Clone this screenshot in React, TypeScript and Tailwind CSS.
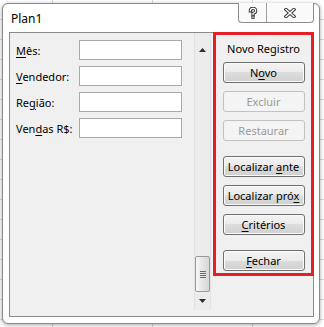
import React from 'react';

const font = "font-['Segoe_UI','Noto_Sans',sans-serif]";

function U({ children }: { children: React.ReactNode }) {
  return <span className="underline decoration-1 underline-offset-[2px]">{children}</span>;
}

function Btn({ children, disabled }: { children: React.ReactNode; disabled?: boolean }) {
  return (
    <div
      className={`flex h-[21px] w-[82px] items-center justify-center rounded-[3px] border text-[11px] leading-none ${
        disabled
          ? 'border-[#c2c2c2] bg-[#f4f4f4] text-[#9a9a9a]'
          : 'border-[#707070] text-black shadow-[inset_0_0_0_1px_#fbfbfb] [background-image:linear-gradient(#f3f3f3_0%,#ebebeb_50%,#dddddd_50%,#d0d0d0_100%)]'
      }`}
    >
      <span className="-mt-px">{children}</span>
    </div>
  );
}

function Field({ label }: { label: React.ReactNode }) {
  return (
    <div className="flex h-[20px] items-center">
      <div className="w-[63px] text-[11px] leading-none text-black">{label}</div>
      <div className="h-[20px] w-[103px] border border-[#a9a9a9] bg-white" />
    </div>
  );
}

function Arrow({ up }: { up?: boolean }) {
  return (
    <svg width="7" height="4" viewBox="0 0 7 4">
      <path d={up ? 'M0 4 L3.5 0 L7 4 Z' : 'M0 0 L7 0 L3.5 4 Z'} fill="#2e2e2e" />
    </svg>
  );
}

export default function App() {
  return (
    <div
      className={`h-[327px] w-[324px] overflow-hidden bg-white pl-[2px] pt-[3px] ${font} [background-image:linear-gradient(to_right,#dadada_1px,transparent_1px),linear-gradient(#dadada_1px,transparent_1px)] [background-size:100px_100%,100%_20px] [background-position:52px_0,0_19px]`}
    >
      {/* dialog window */}
      <div className="flex h-[321px] w-[318px] flex-col rounded-[6px] border border-[#8a8a8a] bg-white shadow-[0_1px_4px_rgba(0,0,0,0.35)]">
        {/* title bar */}
        <div className="flex h-[28px] items-start justify-between">
          <span className="pl-[8px] pt-[9px] text-[12px] leading-none text-black">Plan1</span>
          <div className="-mt-px mr-[5px] flex h-[20px] w-[76px] rounded-b-[4px] border border-t-0 border-[#8c8c8c] bg-[#fafafa]">
            <div className="flex w-[28px] items-center justify-center border-r border-[#a0a0a0]">
              <svg width="10" height="12" viewBox="0 0 10 12">
                <g fill="none" strokeLinecap="square">
                  <path d="M2.3 4 Q2.3 1.3 5 1.3 Q7.7 1.3 7.7 4 Q7.7 5.6 5 6.4 L5 7.6" stroke="#3a3a3a" strokeWidth="3.2" />
                  <path d="M5 10 L5 10.3" stroke="#3a3a3a" strokeWidth="3.2" />
                  <path d="M2.3 4 Q2.3 1.3 5 1.3 Q7.7 1.3 7.7 4 Q7.7 5.6 5 6.4 L5 7.6" stroke="#ffffff" strokeWidth="1.2" />
                  <path d="M5 10 L5 10.3" stroke="#ffffff" strokeWidth="1.2" />
                </g>
              </svg>
            </div>
            <div className="flex flex-1 items-center justify-center">
              <svg width="12" height="10" viewBox="0 0 12 10">
                <g fill="none" strokeLinecap="square">
                  <path d="M2 1.5 L10 8.5 M10 1.5 L2 8.5" stroke="#3a3a3a" strokeWidth="3.4" />
                  <path d="M2 1.5 L10 8.5 M10 1.5 L2 8.5" stroke="#ffffff" strokeWidth="1.4" />
                </g>
              </svg>
            </div>
          </div>
        </div>

        {/* client area */}
        <div className="ml-[6px] flex h-[285px] w-[305px] border border-[#8a8a8a] bg-[#f0f0f0]">
          <div className="flex flex-col gap-[6px] pl-[6px] pt-[7px]">
            <Field label={<><U>M</U>ês:</>} />
            <Field label={<><U>V</U>endedor:</>} />
            <Field label={<>Re<U>g</U>ião:</>} />
            <Field label={<>Ven<U>d</U>as R$:</>} />
          </div>

          {/* scrollbar */}
          <div className="ml-[12px] flex h-[277px] w-[17px] flex-col border-x border-[#e2e2e2] bg-[#ececec]">
            <div className="flex h-[34px] items-center justify-center">
              <Arrow up />
            </div>
            <div className="flex-1" />
            <div className="flex h-[36px] flex-col items-center justify-center gap-[1px] rounded-[2px] border border-[#9a9a9a] [background-image:linear-gradient(to_right,#f6f6f6,#e6e6e6_50%,#d6d6d6)]">
              <div className="h-[1px] w-[6px] bg-[#6a6a6a]" />
              <div className="h-[1px] w-[6px] bg-[#6a6a6a]" />
              <div className="h-[1px] w-[6px] bg-[#6a6a6a]" />
              <div className="h-[1px] w-[6px] bg-[#6a6a6a]" />
            </div>
            <div className="flex h-[18px] items-center justify-center">
              <Arrow />
            </div>
          </div>

          {/* button panel */}
          <div className="-mr-px -mt-px ml-[2px] flex h-[244px] w-[101px] flex-col items-center border-[3px] border-[#e61e25] pt-[6px]">
            <div className="flex h-[14px] items-center text-[11px] leading-none text-black">Novo Registro</div>
            <div className="mt-[7px] flex flex-col gap-[8px]">
              <Btn>N<U>o</U>vo</Btn>
              <Btn disabled>Excluir</Btn>
              <Btn disabled>Restaurar</Btn>
            </div>
            <div className="mt-[15px] flex flex-col gap-[8px]">
              <Btn>Localizar <U>a</U>nte</Btn>
              <Btn>Localizar pró<U>x</U></Btn>
              <Btn><U>C</U>ritérios</Btn>
            </div>
            <div className="mt-[15px]">
              <Btn><U>F</U>echar</Btn>
            </div>
          </div>
        </div>
      </div>
    </div>
  );
}
